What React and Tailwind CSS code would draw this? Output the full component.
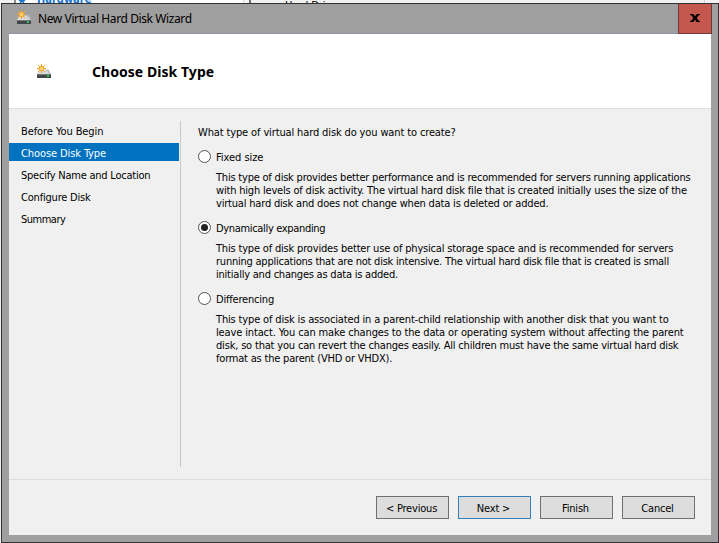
const steps = [
  { label: 'Before You Begin', tracking: 'tracking-[-0.08px]' },
  { label: 'Choose Disk Type', tracking: 'tracking-[-0.1px]', active: true },
  { label: 'Specify Name and Location', tracking: 'tracking-[-0.23px]' },
  { label: 'Configure Disk', tracking: 'tracking-[-0.2px]' },
  { label: 'Summary', tracking: 'tracking-[-0.5px]' },
];

const options = [
  {
    label: 'Fixed size',
    tracking: 'tracking-[-0.05px]',
    height: 'h-[71px]',
    lines: [
      ['This type of disk provides better performance and is recommended for servers running applications', 'tracking-[-0.21px]'],
      ['with high levels of disk activity. The virtual hard disk file that is created initially uses the size of the', 'tracking-[-0.19px]'],
      ['virtual hard disk and does not change when data is deleted or added.', 'tracking-[-0.19px]'],
    ],
  },
  {
    label: 'Dynamically expanding',
    tracking: 'tracking-[-0.33px]',
    height: 'h-[71px]',
    checked: true,
    lines: [
      ['This type of disk provides better use of physical storage space and is recommended for servers', 'tracking-[-0.18px]'],
      ['running applications that are not disk intensive. The virtual hard disk file that is created is small', 'tracking-[-0.23px]'],
      ['initially and changes as data is added.', 'tracking-[-0.22px]'],
    ],
  },
  {
    label: 'Differencing',
    tracking: 'tracking-[-0.2px]',
    height: 'h-[84px]',
    lines: [
      ['This type of disk is associated in a parent-child relationship with another disk that you want to', 'tracking-[-0.155px]'],
      ['leave intact. You can make changes to the data or operating system without affecting the parent', 'tracking-[-0.136px]'],
      ['disk, so that you can revert the changes easily. All children must have the same virtual hard disk', 'tracking-[-0.18px]'],
      ['format as the parent (VHD or VHDX).', 'tracking-[-0.2px]'],
    ],
  },
];

const buttons = [
  { label: '< Previous', border: 'border-[#707070]' },
  { label: 'Next >', border: 'border-[#3381ba]' },
  { label: 'Finish', border: 'border-[#707070]' },
  { label: 'Cancel', border: 'border-[#707070]' },
];

function DiskIcon() {
  return (
    <svg width="15" height="15" viewBox="0 0 15 15" className="block shrink-0">
      <path d="M2 5.5h9.5L14 10H0z" fill="#d8d9dc" />
      <path d="M9 5.5h2.5L14 10h-2z" fill="#c2c3c7" />
      <rect x="0" y="10" width="14" height="4" fill="#43474a" />
      <rect x="0" y="10" width="14" height="1" fill="#77797c" />
      <rect x="10" y="11" width="2" height="2" fill="#22c84a" />
      <path d="M4 0h1v9H4zM0 4h9v1H0z" fill="#efa02a" />
      <path d="M1 1h1v1H1zM7 1h1v1H7zM1 7h1v1H1zM7 7h1v1H7z" fill="#f0a830" />
      <rect x="2" y="2" width="5" height="5" fill="#f5aa33" />
      <rect x="3" y="3" width="3" height="3" fill="#ffd169" />
    </svg>
  );
}

function Radio({ checked }) {
  return (
    <span className="flex h-[13px] w-[13px] shrink-0 items-center justify-center rounded-full border border-[#555] bg-white">
      {checked && <span className="h-[7px] w-[7px] rounded-full bg-[#222]" />}
    </span>
  );
}

function ParentWindow() {
  return (
    <div className="flex h-[3px] overflow-hidden bg-[#f0f0f0]">
      <div className="ml-[14px] flex w-[229px] border-l-2 border-[#8a8d92] bg-white">
        <svg width="12" height="3" viewBox="0 0 12 3" className="ml-px block">
          <path d="M2 0l3 1.5L8 0M5 0v1.5M3 3l2-2 2 2" stroke="#1472c8" strokeWidth="1.4" fill="none" />
        </svg>
        <span className="-mt-[7px] ml-[8px] text-[11px] leading-[13px] font-bold text-[#1c76cc]">Hardware</span>
      </div>
      <div className="w-[6px] border-l border-[#d8d8d8] bg-[#f4f4f4]" />
      <div className="flex w-[455px] border-l-2 border-[#6e6e6e]">
        <span className="-mt-px ml-[34px] leading-[13px] tracking-[-0.1px]">Hard Drive</span>
      </div>
      <div className="flex-1 border-l border-[#cfcfcf]" />
    </div>
  );
}

export default function App() {
  return (
    <div className="flex h-[543px] w-[719px] flex-col overflow-hidden bg-[#f0f0f0] font-['DejaVu_Sans_Condensed','DejaVu_Sans',sans-serif] text-[11px] leading-[13px] whitespace-nowrap text-black">
      <ParentWindow />
      <div className="ml-px flex h-[540px] flex-col border border-[#303236] bg-[#9f9f9f]">
        <header className="flex h-[30px] pr-[6px] pl-[7px]">
          <div className="flex flex-1 items-start gap-[6px] border-b border-[#9094a8] pt-[6px] pl-2">
            <DiskIcon />
            <span className="font-['Noto_Sans',sans-serif] text-[12px] leading-[17px] tracking-[-0.4px]">New Virtual Hard Disk Wizard</span>
          </div>
          <button className="flex h-[30px] w-[34px] items-center justify-center border-x border-b border-[#6b3a38] bg-[#c4584f]" aria-label="Close">
            <svg width="10" height="8" viewBox="0 0 10 8" className="mb-[2px] block">
              <path d="M0 0h3.4L5 2.4 6.6 0H10v1H9L6.6 4 9 7h1v1H6.6L5 5.6 3.4 8H0V7h1l2.4-3L1 1H0z" fill="#000" />
            </svg>
          </button>
        </header>
        <div className="mr-[6px] ml-[7px] flex h-[501px] w-[702px] flex-col bg-[#f0f0f0]">
          <div className="flex h-[75px] items-center border-b border-[#e0e0e0] bg-white pl-7">
            <DiskIcon />
            <h1 className="ml-10 font-['Noto_Sans',sans-serif] text-[14px] font-bold tracking-[0.05px]">Choose Disk Type</h1>
          </div>
          <div className="flex h-[370px]">
            <nav className="flex w-[170px] flex-col gap-1 pt-3">
              {steps.map((s) => (
                <div key={s.label} className={`flex h-[18px] items-center pt-[2px] pl-[12px] ${s.active ? 'bg-[#0072bf] text-white' : ''}`}>
                  <span className={s.tracking}>{s.label}</span>
                </div>
              ))}
            </nav>
            <div className="mt-3 ml-px h-[346px] w-[2px] border-l border-[#c8c8c8]" />
            <main className="pt-[17px] pl-[16px]">
              <p className="mb-[11px] tracking-[-0.13px]">What type of virtual hard disk do you want to create?</p>
              {options.map((o) => (
                <section key={o.label} className={o.height}>
                  <div className="flex gap-[5px]">
                    <Radio checked={o.checked} />
                    <span className={`mt-px ${o.tracking}`}>{o.label}</span>
                  </div>
                  <div className="mt-[7px] ml-[18px]">
                    {o.lines.map(([text, tracking]) => (
                      <div key={text} className={tracking}>{text}</div>
                    ))}
                  </div>
                </section>
              ))}
            </main>
          </div>
          <footer className="flex flex-1 gap-[9px] border-t border-[#dcdcdc] pt-[16px] pl-[367px]">
            {buttons.map((b) => (
              <button key={b.label} className={`flex h-[23px] w-[73px] items-center justify-center border bg-[#dddddd] pt-[2px] pr-[2px] tracking-[-0.2px] ${b.border}`}>
                {b.label}
              </button>
            ))}
          </footer>
        </div>
      </div>
    </div>
  );
}
